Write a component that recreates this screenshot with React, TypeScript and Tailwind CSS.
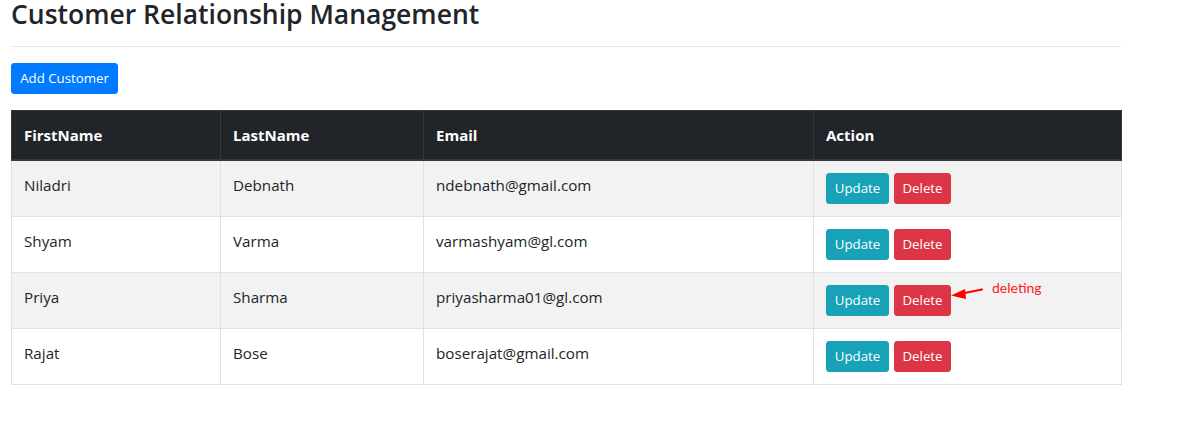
const customers = [
    { first: "Niladri", last: "Debnath", email: "ndebnath@gmail.com" },
    { first: "Shyam", last: "Varma", email: "varmashyam@gl.com" },
    { first: "Priya", last: "Sharma", email: "priyasharma01@gl.com" },
    { first: "Rajat", last: "Bose", email: "boserajat@gmail.com" },
];

const App = (): JSX.Element => {
    return (
        <div
            className="relative w-[1196px] h-[441px] bg-white text-[#212529] overflow-hidden"
            style={{ fontFamily: '"Open Sans", "Noto Sans", sans-serif' }}
        >
            <div className="pl-[11px] w-[1121px]">
                {/* Page title */}
                <h3 className="text-[26.5px] leading-[27px] font-semibold m-0 pt-[1px]">
                    Customer Relationship Management
                </h3>
                <hr className="mt-[18px] mb-4 border-0 border-t border-black/10" />

                <button className="block text-[13.25px] leading-[21px] px-2 py-1 w-[107px] border border-[#007bff] bg-[#007bff] text-white rounded-[3px]">
                    Add Customer
                </button>

                {/* Customers table */}
                <table className="mt-4 w-[1110px] table-fixed border-collapse border border-[#dee2e6] text-[15.2px]">
                    <colgroup>
                        <col className="w-[209px]" />
                        <col className="w-[203px]" />
                        <col className="w-[390px]" />
                        <col className="w-[308px]" />
                    </colgroup>
                    <thead>
                        <tr className="bg-[#212529] text-white">
                            {["FirstName", "LastName", "Email", "Action"].map((h) => (
                                <th
                                    key={h}
                                    className="text-left text-[15px] font-bold p-3 leading-6 border border-[#32383e] border-b-2"
                                >
                                    {h}
                                </th>
                            ))}
                        </tr>
                    </thead>
                    <tbody>
                        {customers.map((c, idx) => (
                            <tr key={c.email} className={idx % 2 === 0 ? "bg-[#f2f2f2]" : "bg-white"}>
                                <td className="p-3 leading-6 align-top border border-[#dee2e6]">{c.first}</td>
                                <td className="p-3 leading-6 align-top border border-[#dee2e6]">{c.last}</td>
                                <td className="p-3 leading-6 align-top border border-[#dee2e6]">{c.email}</td>
                                <td className="p-3 align-top border border-[#dee2e6]">
                                    <div className="flex gap-[5px]">
                                        <button className="text-[13.25px] leading-[21px] py-1 w-[63px] border border-[#17a2b8] bg-[#17a2b8] text-white rounded-[3px]">
                                            Update
                                        </button>
                                        <button className="text-[13.25px] leading-[21px] py-1 w-[57px] border border-[#dc3545] bg-[#dc3545] text-white rounded-[3px]">
                                            Delete
                                        </button>
                                    </div>
                                </td>
                            </tr>
                        ))}
                    </tbody>
                </table>
            </div>

            {/* Annotation pointing at a delete button */}
            <svg className="absolute left-[948px] top-[284px]" width="40" height="20" viewBox="0 0 40 20">
                <line x1="34" y1="5.5" x2="14" y2="9.5" stroke="#ff0000" strokeWidth="2.2" strokeLinecap="round" />
                <polygon points="3,11.5 17,5 18,15" fill="#ff0000" />
            </svg>
            <span
                className="absolute left-[992px] top-[278px] text-[14px] leading-5 text-[#ff1a1a]"
                style={{ fontFamily: "Lato, sans-serif" }}
            >
                deleting
            </span>
        </div>
    );
};

export default App;
